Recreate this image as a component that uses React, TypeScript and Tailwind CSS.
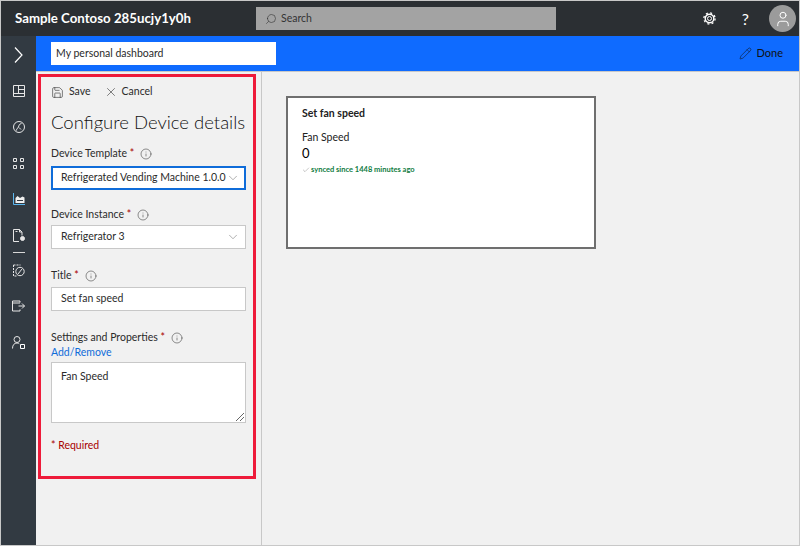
import { Save, X, ChevronDown, Info, Search, Pencil, User, Check } from 'lucide-react';

function Label({ text, gap = 'gap-[6px]' }: { text: string; gap?: string }) {
  return (
    <div className={`flex items-center ${gap} h-4 text-[10.5px] text-[#2b2b2b]`}>
      <span>
        {text} <span className="text-[#a80000]">*</span>
      </span>
      <Info size={12} strokeWidth={1.2} className="text-[#444]" />
    </div>
  );
}

function SideIcon({ children, className = '' }: { children: React.ReactNode; className?: string }) {
  return <div className={`h-9 flex items-center justify-center text-[#e6e6e6] ${className}`}>{children}</div>;
}

function Sidebar() {
  return (
    <div className="w-[35px] shrink-0 bg-[#323a42] flex flex-col pt-[1px]">
      <SideIcon>
        <svg width="9" height="16" viewBox="0 0 9 16" fill="none" stroke="#fff" strokeWidth="1.2">
          <path d="M1 .5 8 8l-7 7.500" />
        </svg>
      </SideIcon>
      <SideIcon>
        <svg width="12" height="12" viewBox="0 0 12 12" fill="none" stroke="currentColor">
          <path d="M.5.5h11v11H.5zM.5 8.500h11M5.500.5v8M5.500 4.500h6" />
        </svg>
      </SideIcon>
      <SideIcon>
        <svg width="12" height="12" viewBox="0 0 12 12" fill="none" stroke="currentColor">
          <circle cx="6" cy="6" r="5.500" />
          <path d="M3.500 9.500c0-2.500 1.500-2 2-3.500S6 3 8.500 2.500M6 6.500 8 8.500" />
        </svg>
      </SideIcon>
      <SideIcon>
        <svg width="11" height="11" viewBox="0 0 11 11" fill="none" stroke="currentColor">
          <path d="M.5.5h3v3h-3zM7.500.5h3v3h-3zM.5 7.500h3v3h-3zM7.500 7.500h3v3h-3z" />
        </svg>
      </SideIcon>
      <SideIcon>
        <svg width="12" height="12" viewBox="0 0 12 12" fill="none">
          <path d="M.5 0v11.500H12" stroke="#5cb8f0" />
          <path d="M2.500 5 4.500 3l2.500 2L9.500 3.500l2 1V10h-9z" fill="#f0f0f0" />
          <path d="M4 7.500h6" stroke="#323a42" />
        </svg>
      </SideIcon>
      <SideIcon>
        <svg width="12" height="13" viewBox="0 0 12 13" fill="none" stroke="currentColor">
          <path d="M6 12.500H.5V.5h6l2.500 2.500v3.500M6.500.5V3H9M2.500 2.500h2" />
          <circle cx="9.500" cy="9.500" r="2" fill="currentColor" />
        </svg>
      </SideIcon>
      <div className="h-px w-3 bg-[#d8d8d8] mx-auto -my-[1px]" />
      <SideIcon>
        <svg width="12" height="13" viewBox="0 0 12 13" fill="none" stroke="currentColor">
          <path d="M.5 1h7M.5 1v11h3" strokeDasharray="2 1" />
          <circle cx="7" cy="7.500" r="4.200" />
          <path d="M5 10 9 5" />
        </svg>
      </SideIcon>
      <SideIcon>
        <svg width="13" height="12" viewBox="0 0 13 12" fill="none" stroke="currentColor">
          <path d="M8 2.500V1H.5v10H8V9.500M.5 3h7.500M6.500 6h6M10 3.500 12.500 6 10 8.500" />
        </svg>
      </SideIcon>
      <SideIcon>
        <svg width="13" height="13" viewBox="0 0 13 13" fill="none" stroke="currentColor">
          <circle cx="5" cy="3.500" r="3" />
          <path d="M.5 12.500c0-3.500 1.800-5.500 4.500-5.500 1 0 1.800.3 2.300.8" />
          <path d="M8.500 8.500h4v4h-4z" stroke="#fff" />
        </svg>
      </SideIcon>
    </div>
  );
}

function ConfigPanel() {
  return (
    <div className="relative w-[226px] shrink-0 bg-[#f1f1f1] border-r border-[#c8c8c8] pl-[15px] pr-[15px] text-[#2b2b2b]">
      <div className="flex items-center h-[16px] mt-[12px] text-[10.5px]">
        <Save size={13} strokeWidth={1.1} className="mr-[5px]" />
        <span className="mr-[13px]">Save</span>
        <X size={14} strokeWidth={1} className="mr-[4px]" />
        <span>Cancel</span>
      </div>
      <div className="mt-[8px] h-[28px] text-[18.5px] leading-[28px] font-light text-[#111] whitespace-nowrap">
        Configure Device details
      </div>
      <div className="mt-[10px]">
        <Label text="Device Template" />
      </div>
      <div className="mt-[4px] h-6 border-2 border-[#0f6cd9] bg-white flex items-center justify-between pl-2 pr-[4px] text-[10.5px] whitespace-nowrap">
        <span>Refrigerated Vending Machine 1.0.0</span>
        <ChevronDown size={14} strokeWidth={1} className="text-[#777]" />
      </div>
      <div className="mt-[17px]">
        <Label text="Device Instance" />
      </div>
      <div className="mt-[2px] h-6 border border-[#c8c8c8] bg-white flex items-center justify-between pl-[9px] pr-[5px] text-[10.5px]">
        <span>Refrigerator 3</span>
        <ChevronDown size={14} strokeWidth={1} className="text-[#777]" />
      </div>
      <div className="mt-[19px]">
        <Label text="Title" />
      </div>
      <div className="mt-[3px] h-6 border border-[#c8c8c8] bg-white flex items-center pl-[9px] text-[10.5px]">
        Set fan speed
      </div>
      <div className="mt-[19px]">
        <Label text="Settings and Properties" />
      </div>
      <div className="-mt-[1px] h-[15px] leading-[15px] text-[10.5px] text-[#0f6cd9]">Add/Remove</div>
      <div className="relative mt-[2px] h-[61px] border border-[#c8c8c8] bg-white pl-[9px] pt-[5px] text-[10.5px] leading-4">
        Fan Speed
        <svg className="absolute right-0 bottom-0" width="10" height="10" viewBox="0 0 10 10" stroke="#666">
          <path d="M1 9 9 1M5 9l4-4" />
        </svg>
      </div>
      <div className="mt-[14px] h-4 leading-4 text-[10.5px] text-[#a80000]">* Required</div>
      {/* annotation drawn over the screenshot */}
      <div className="absolute left-[2px] top-[2px] w-[218px] h-[405px] border-[3px] border-[#ee1b3a]" />
    </div>
  );
}

function Card() {
  return (
    <div className="w-[310px] h-[153px] border-2 border-[#6f6f6f] bg-white pl-[14px] pt-[7px] text-[#222]">
      <div className="h-4 leading-4 text-[10.5px] font-bold">Set fan speed</div>
      <div className="mt-2 h-4 leading-4 text-[10.5px]">Fan Speed</div>
      <div className="h-4 leading-4 text-[13px] text-black">0</div>
      <div className="mt-[1px] h-4 flex items-center gap-[1px] text-[7.5px] text-[#107c41] font-bold">
        <Check size={8} strokeWidth={1} className="text-[#555]" />
        <span>synced since 1448 minutes ago</span>
      </div>
    </div>
  );
}

export default function App() {
  return (
    <div
      className="w-[800px] h-[546px] overflow-hidden flex flex-col bg-[#f1f1f1] border border-[#c8c8c8]"
      style={{ fontFamily: 'Lato, "Noto Sans", sans-serif' }}
    >
      <header className="h-[35px] shrink-0 bg-[#2b2f33] flex items-center text-white pl-[14px]">
        <div className="w-[241px] text-[13.25px] font-bold whitespace-nowrap">Sample Contoso 285ucjy1y0h</div>
        <div className="w-[300px] h-[23px] bg-[#a3a3a3] flex items-center pl-[9px] gap-[4px] text-[10.5px] text-[#333]">
          <Search size={12} strokeWidth={1.2} className="-scale-x-100" />
          <span>Search</span>
        </div>
        <div className="ml-auto flex items-center">
          <svg className="mr-[26px]" width="13" height="13" viewBox="0 0 13 13" fill="none" stroke="#fff">
            <circle cx="6.500" cy="6.500" r="2" />
            <circle cx="6.500" cy="6.500" r="4.300" strokeWidth="1.400" />
            <circle cx="6.500" cy="6.500" r="5.600" strokeWidth="1.300" strokeDasharray="2 2.400" />
          </svg>
          <span className="text-[16px] mr-[20px]">?</span>
          <div className="w-[27px] h-[27px] rounded-full bg-[#9b9b9b] flex items-center justify-center mr-[3px]">
            <User size={18} strokeWidth={1.3} />
          </div>
        </div>
      </header>
      <div className="flex-1 flex min-h-0">
        <Sidebar />
        <div className="flex-1 flex flex-col min-w-0">
          <div className="h-[36px] shrink-0 bg-[#0f6bff] border-b border-[#c8c8c8] flex items-center pl-[15px] pr-[16px]">
            <div className="w-[225px] h-[23px] bg-white flex items-center pl-[5px] text-[10.5px] text-[#2b2b2b]">
              My personal dashboard
            </div>
            <div className="ml-auto flex items-center gap-[5px] text-[11px] text-[#111]">
              <Pencil size={13} strokeWidth={1} />
              <span>Done</span>
            </div>
          </div>
          <div className="flex-1 flex min-h-0">
            <ConfigPanel />
            <div className="flex-1 pl-6 pt-[24px]">
              <Card />
            </div>
          </div>
        </div>
      </div>
    </div>
  );
}
